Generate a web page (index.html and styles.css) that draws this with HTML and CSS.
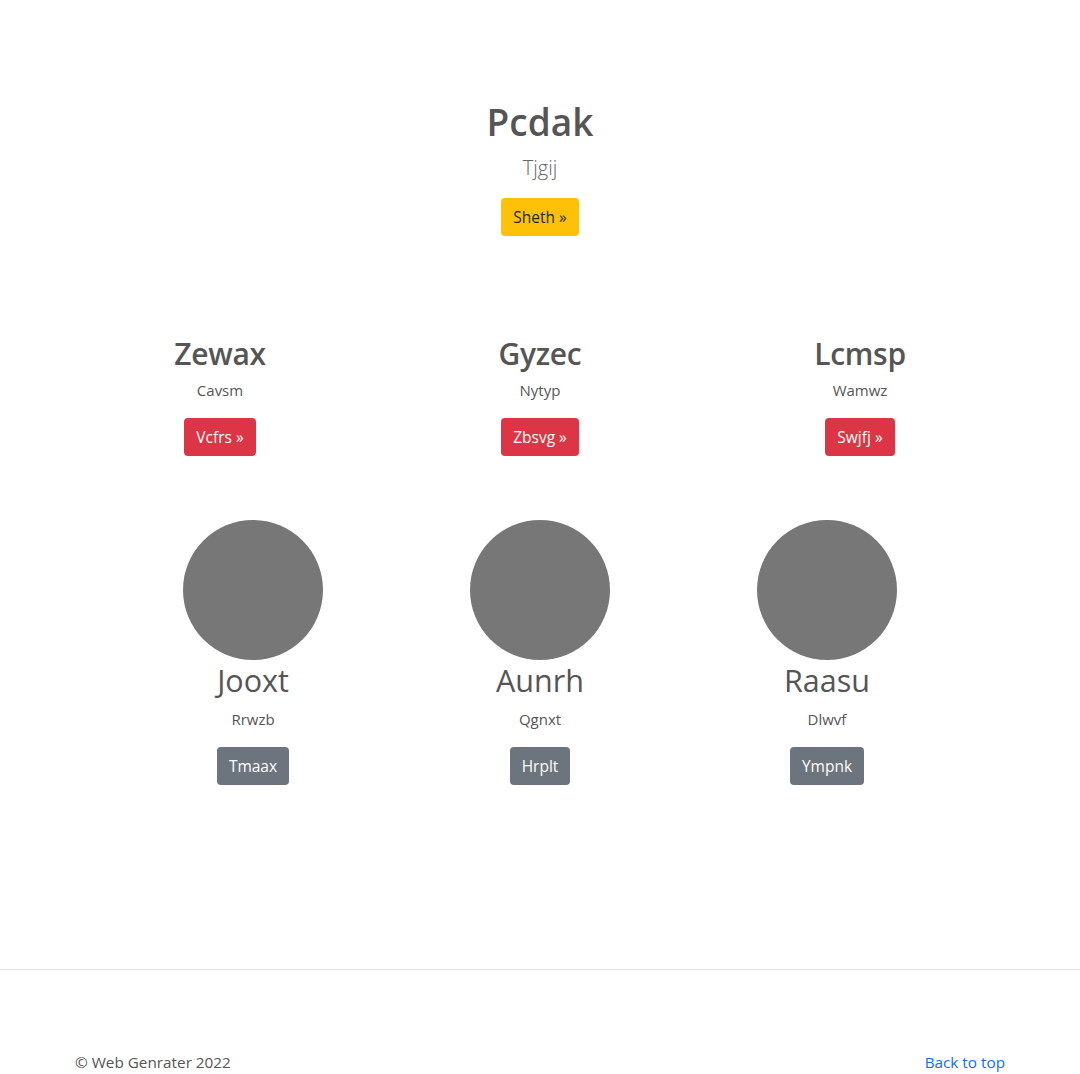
FILE: index.html
```html
<!DOCTYPE html>
<html lang="en">
<head>
<meta charset="utf-8">
<title>Pcdak</title>
<link rel="stylesheet" href="styles.css">
</head>
<body>
<main>
  <section class="hero">
    <h1 class="hero-title">Pcdak</h1>
    <p class="lead">Tjgij</p>
    <a class="btn btn-warning" href="#">Sheth &raquo;</a>
  </section>

  <section class="features">
    <div class="feature">
      <h2 class="feature-title">Zewax</h2>
      <p class="text">Cavsm</p>
      <a class="btn btn-danger" href="#">Vcfrs &raquo;</a>
    </div>
    <div class="feature">
      <h2 class="feature-title">Gyzec</h2>
      <p class="text">Nytyp</p>
      <a class="btn btn-danger" href="#">Zbsvg &raquo;</a>
    </div>
    <div class="feature">
      <h2 class="feature-title">Lcmsp</h2>
      <p class="text">Wamwz</p>
      <a class="btn btn-danger" href="#">Swjfj &raquo;</a>
    </div>
  </section>

  <section class="marketing">
    <div class="person">
      <div class="avatar"></div>
      <h2 class="person-name">Jooxt</h2>
      <p class="text">Rrwzb</p>
      <a class="btn btn-secondary" href="#">Tmaax</a>
    </div>
    <div class="person">
      <div class="avatar"></div>
      <h2 class="person-name">Aunrh</h2>
      <p class="text">Qgnxt</p>
      <a class="btn btn-secondary" href="#">Hrplt</a>
    </div>
    <div class="person">
      <div class="avatar"></div>
      <h2 class="person-name">Raasu</h2>
      <p class="text">Dlwvf</p>
      <a class="btn btn-secondary" href="#">Ympnk</a>
    </div>
  </section>
</main>

<footer class="footer">
  <div class="footer-inner">
    <p class="copy">&copy; Web Genrater 2022</p>
    <a class="top-link" href="#">Back to top</a>
  </div>
</footer>
</body>
</html>
```

FILE: styles.css
```css
* { box-sizing: border-box; }

html, body {
  margin: 0;
  padding: 0;
  background: #fff;
}

body {
  font-family: "Open Sans", "Noto Sans", "Liberation Sans", sans-serif;
  color: #555;
  font-size: 16px;
  line-height: 1.5;
}

h1, h2, p { margin: 0; }

main {
  height: 969px;
  padding-top: 95px;
}

.hero {
  display: flex;
  flex-direction: column;
  align-items: center;
  text-align: center;
}

.hero-title {
  font-size: 37px;
  font-weight: 600;
  line-height: 54px;
  color: #555;
}

.lead {
  font-size: 20px;
  font-weight: 300;
  line-height: 30px;
  margin-top: 4px;
  color: #666;
}

.hero .btn { margin-top: 15px; }

.btn {
  display: inline-block;
  padding: 6px 12px;
  font-size: 15.5px;
  line-height: 26px;
  border-radius: 4px;
  text-decoration: none;
  border: 0;
}

.btn-warning { background: #ffc107; color: #212529; }
.btn-danger { background: #dc3545; color: #fff; }
.btn-secondary { background: #6c757d; color: #fff; }

.features {
  width: 960px;
  margin: 99px auto 0;
  display: grid;
  grid-template-columns: repeat(3, 1fr);
}

.feature, .person {
  display: flex;
  flex-direction: column;
  align-items: center;
  text-align: center;
}

.feature-title {
  font-size: 30px;
  font-weight: 600;
  line-height: 37px;
  color: #555;
  letter-spacing: -0.3px;
}

.text {
  font-size: 15px;
  line-height: 24px;
  margin-top: 6px;
  color: #555;
}

.feature .btn, .person .btn { margin-top: 16px; }

.marketing {
  width: 861px;
  margin: 64px auto 0;
  display: grid;
  grid-template-columns: repeat(3, 1fr);
}

.avatar {
  width: 140px;
  height: 140px;
  border-radius: 50%;
  background: #777;
}

.person-name {
  font-size: 30.5px;
  font-weight: 400;
  line-height: 37px;
  margin-top: 2px;
  color: #555;
}

.person .text { margin-top: 8px; }

.footer {
  border-top: 1px solid #e5e5e5;
  height: 105px;
}

.footer-inner {
  width: 960px;
  margin: 0 auto;
  padding: 80px 15px 0;
  display: flex;
  justify-content: space-between;
  font-size: 15.3px;
  line-height: 24px;
}

.copy { color: #555; }

.top-link {
  color: #0d6efd;
  text-decoration: none;
}
```
